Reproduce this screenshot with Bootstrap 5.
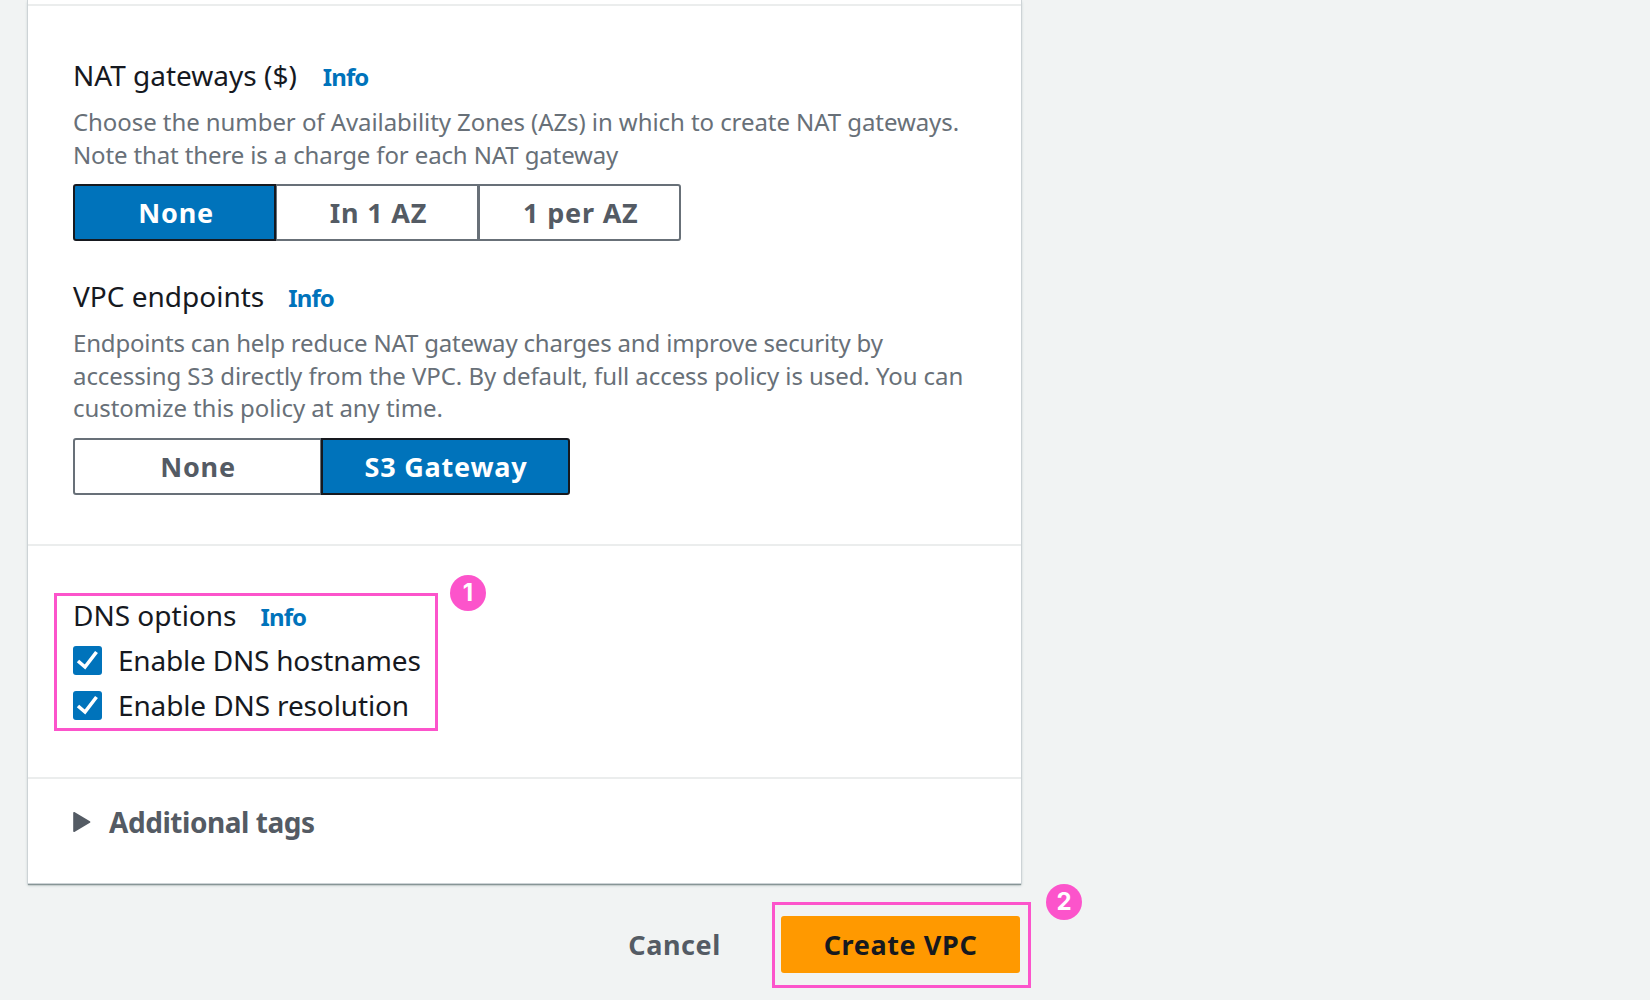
<!doctype html>
<html lang="en">
<head>
<meta charset="utf-8">
<meta name="viewport" content="width=device-width, initial-scale=1">
<title>Create VPC</title>
<link href="https://cdn.jsdelivr.net/npm/bootstrap@5.3.0/dist/css/bootstrap.min.css" rel="stylesheet">
<style>
  body { background: #f1f3f3; color: #16191f; font-family: "Noto Sans", "Open Sans", sans-serif; font-size: 28px; line-height: 36px; height: 1000px; overflow: hidden; }
  .page-col { width: 993px; margin-left: 28px; }
  .vpc-panel { height: 883px; background: #fff; box-shadow: 0 0 0 1px #cdd3d6, 0 2px 1px 0 #879596, 0 2px 3px 0 #aab7b8; }
  .panel-top { height: 6px; border-bottom: 2px solid #ebeded; }
  .sec { padding-left: 45px; padding-right: 46px; }
  .sec + .sec { border-top: 2px solid #ebeded; }
  .sec-network { height: 538px; padding-top: 51px; }
  .sec-dns { height: 233px; padding-top: 51px; }
  .sec-tags { height: 106px; padding-top: 25px; }
  .opt-title { font-size: 28px; line-height: 36px; height: 36px; font-weight: 400; gap: 24px; }
  .info-link { color: #0073bb; font-size: 24px; font-weight: 700; letter-spacing: -.9px; }
  .hint { color: #687078; font-size: 24px; line-height: 32.6px; margin: 13px 0; letter-spacing: -.07px; white-space: nowrap; }
  .seg { height: 57px; }
  .seg .btn { --bs-btn-border-radius: 3px; --bs-btn-padding-y: 0; --bs-btn-color: #545b64; --bs-btn-border-color: #687078; --bs-btn-border-width: 2px; --bs-btn-bg: #fff;
    --bs-btn-active-bg: #0073bb; --bs-btn-active-color: #fff; --bs-btn-active-border-color: #16191f;
    font-size: 27px; font-weight: 700; letter-spacing: .8px; line-height: 53px; height: 57px; padding-left: 1px; padding-right: 0; box-shadow: none; flex: 1 1 0; }
  .seg.seg3 { width: 608px; }
  .seg.seg3 .btn:first-child { flex-basis: 3px; }
  .seg.seg3 .btn { padding-left: 3px; }
  .seg.seg2 { width: 497px; }
  .seg .btn:not(:first-child) { margin-left: -2px; }
  .gap-sec { margin-top: 37px; }
  .opt-check { margin-top: 9px; height: 36px; gap: 16px; }
  .opt-check svg { width: 29px; height: 29px; flex: none; }
  .tags-label { color: #545b64; font-weight: 700; letter-spacing: -.45px; gap: 18px; }
  .actions { height: 57px; margin-top: 33px; gap: 24px; padding-right: 1px; }
  .actions .btn { font-size: 27px; font-weight: 700; line-height: 57px; padding: 0 36px; border: 0; letter-spacing: .6px; }
  .btn-cancel { color: #545b64; }
  .actions .btn-create { width: 239px; padding: 0; background: #ff9900; color: #16191f; border-radius: 3px; }
  .hl { border: 3px solid #fc54cb; pointer-events: none; }
  .hl-dns { left: -19px; top: -4px; width: 384px; height: 138px; }
  .hl-create { left: -9px; top: -14px; width: 259px; height: 86px; }
  .pin { width: 36px; height: 36px; border-radius: 50%; background: #fc54cb; color: #fff; font: 700 24px/36px Inter, sans-serif; text-align: center; letter-spacing: 0; }
  .pin-dns { left: 377px; top: -22px; }
  .pin-create { left: 265px; top: -32px; }
</style>
</head>
<body>
<main class="page-col">
  <div class="vpc-panel">
    <div class="panel-top"></div>

    <section class="sec sec-network">
      <div class="opt-title d-flex align-items-baseline"><span>NAT gateways ($)</span><a class="info-link text-decoration-none" href="#" style="margin-left:2px">Info</a></div>
      <p class="hint">Choose the number of Availability Zones (AZs) in which to create NAT gateways.<br><span style="letter-spacing:-.13px">Note that there is a charge for each NAT gateway</span></p>
      <div class="btn-group seg seg3 d-flex">
        <button type="button" class="btn active">None</button>
        <button type="button" class="btn">In 1 AZ</button>
        <button type="button" class="btn">1 per AZ</button>
      </div>

      <div class="opt-title d-flex align-items-baseline gap-sec"><span>VPC endpoints</span><a class="info-link text-decoration-none" href="#">Info</a></div>
      <p class="hint"><span style="letter-spacing:-.18px">Endpoints can help reduce NAT gateway charges and improve security by</span><br>accessing S3 directly from the VPC. By default, full access policy is used. You can<br>customize this policy at any time.</p>
      <div class="btn-group seg seg2 d-flex">
        <button type="button" class="btn">None</button>
        <button type="button" class="btn active">S3 Gateway</button>
      </div>
    </section>

    <section class="sec sec-dns">
      <div class="position-relative">
        <div class="opt-title d-flex align-items-baseline"><span>DNS options</span><a class="info-link text-decoration-none" href="#">Info</a></div>
        <div class="opt-check d-flex align-items-center">
          <svg viewBox="0 0 29 29"><rect width="29" height="29" rx="3" fill="#0073bb"/><path d="M5 15l7 6L23.5 6" fill="none" stroke="#fff" stroke-width="3.6"/></svg>
          <span style="letter-spacing:-.2px">Enable DNS hostnames</span>
        </div>
        <div class="opt-check d-flex align-items-center">
          <svg viewBox="0 0 29 29"><rect width="29" height="29" rx="3" fill="#0073bb"/><path d="M5 15l7 6L23.5 6" fill="none" stroke="#fff" stroke-width="3.6"/></svg>
          <span style="letter-spacing:-.13px">Enable DNS resolution</span>
        </div>
        <div class="hl hl-dns position-absolute"></div>
        <span class="pin pin-dns position-absolute">1</span>
      </div>
    </section>

    <section class="sec sec-tags">
      <div class="tags-label d-flex align-items-center">
        <svg width="18" height="20" viewBox="0 0 18 20"><path d="M1 .8L16.500 10 1 19.2z" fill="#545b64" stroke="#545b64" stroke-width="1.6" stroke-linejoin="round"/></svg>
        <span>Additional tags</span>
      </div>
    </section>
  </div>

  <div class="actions d-flex justify-content-end">
    <button type="button" class="btn btn-cancel">Cancel</button>
    <div class="position-relative">
      <button type="button" class="btn btn-create">Create VPC</button>
      <div class="hl hl-create position-absolute"></div>
      <span class="pin pin-create position-absolute">2</span>
    </div>
  </div>
</main>
<script src="https://cdn.jsdelivr.net/npm/bootstrap@5.3.0/dist/js/bootstrap.bundle.min.js"></script>
</body>
</html>
